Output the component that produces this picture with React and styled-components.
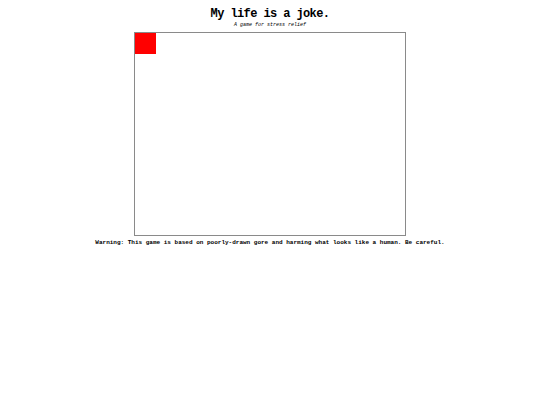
import React from 'react';
import styled, { createGlobalStyle } from 'styled-components';

const GlobalStyle = createGlobalStyle`
  body {
    margin: 8px;
    background: #fff;
    color: #000;
    font-family: "Liberation Mono", "DejaVu Sans Mono", monospace;
  }
`;

const Page = styled.div`
  display: flex;
  flex-direction: column;
  align-items: center;
`;

const Title = styled.h1`
  margin: 0;
  font-size: 12px;
  line-height: 13px;
  font-weight: bold;
  letter-spacing: -0.6px;
`;

const Subtitle = styled.p`
  margin: 1px 0 4px;
  font-size: 5px;
  line-height: 6px;
  font-style: italic;
`;

// the play area
const Board = styled.div`
  width: 272px;
  height: 204px;
  border: 1px solid #8a8a8a;
  box-sizing: border-box;
  position: relative;
  background: #fff;
`;

const Player = styled.div`
  position: absolute;
  left: ${p => p.x}px;
  top: ${p => p.y}px;
  width: ${p => p.size}px;
  height: ${p => p.size}px;
  background: #ff0000;
`;

const Warning = styled.p`
  margin: 3px 0 0;
  font-size: 6px;
  line-height: 8px;
  font-weight: bold;
`;

const App = () => {
  const player = { x: 0, y: 0, size: 21 };

  return (
    <Page>
      <GlobalStyle />
      <Title>My life is a joke.</Title>
      <Subtitle>A game for stress relief</Subtitle>
      <Board>
        <Player x={player.x} y={player.y} size={player.size} />
      </Board>
      <Warning>
        Warning: This game is based on poorly-drawn gore and harming what looks like a human. Be careful.
      </Warning>
    </Page>
  );
};

export default App;
